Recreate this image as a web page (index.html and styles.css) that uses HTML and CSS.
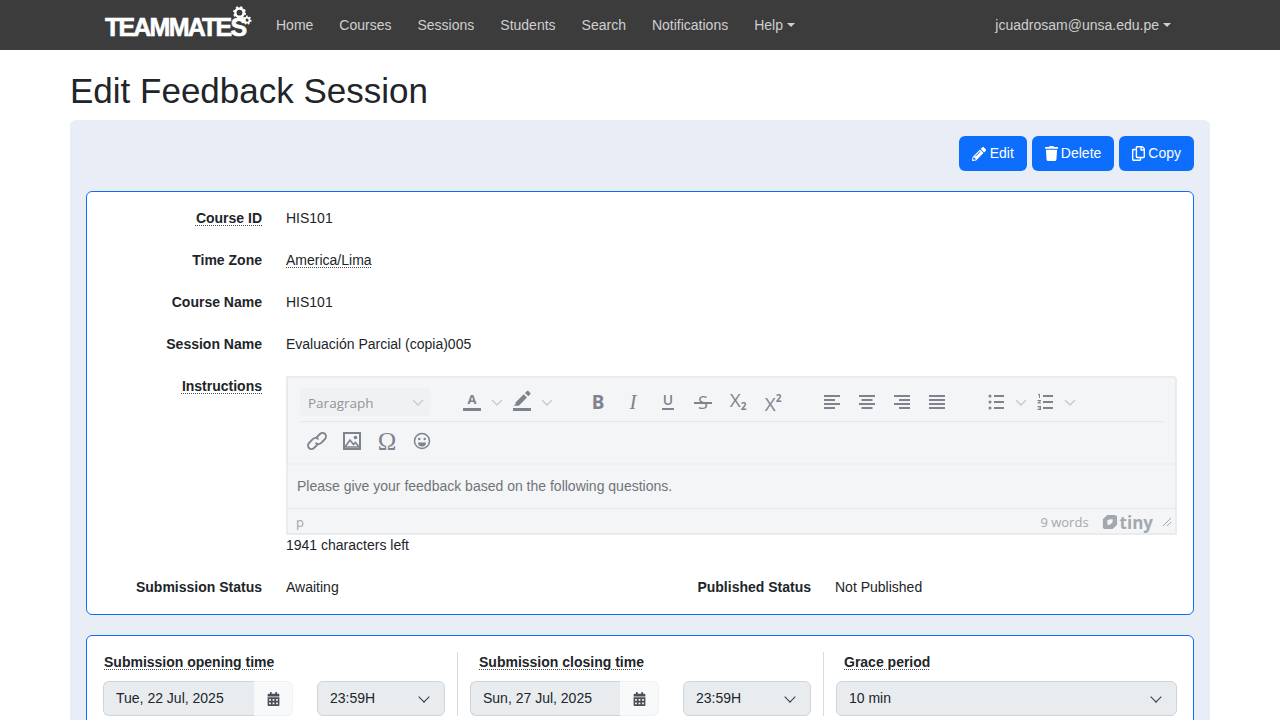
FILE: index.html
```html
<!DOCTYPE html>
<html lang="en">
<head>
    <meta charset="UTF-8">
    <title>Edit Feedback Session</title>
    <link rel="stylesheet" href="styles.css">
</head>
<body>
    <nav class="navbar">
        <a class="brand">TEAMMATES
            <svg class="gears" viewBox="0 0 24 24" width="20" height="20">
                <circle cx="9" cy="8" r="5" fill="none" stroke="#fff" stroke-width="3"/>
                <circle cx="9" cy="8" r="6.6" fill="none" stroke="#fff" stroke-width="2.4" stroke-dasharray="2.6 2.6"/>
                <circle cx="18" cy="17" r="3" fill="none" stroke="#fff" stroke-width="2.2"/>
                <circle cx="18" cy="17" r="4.6" fill="none" stroke="#fff" stroke-width="1.8" stroke-dasharray="2 2"/>
            </svg>
        </a>
        <a class="nav-link">Home</a>
        <a class="nav-link">Courses</a>
        <a class="nav-link">Sessions</a>
        <a class="nav-link">Students</a>
        <a class="nav-link">Search</a>
        <a class="nav-link">Notifications</a>
        <a class="nav-link caret">Help</a>
        <a class="nav-link caret user">jcuadrosam@unsa.edu.pe</a>
    </nav>

    <main class="container">
        <h1>Edit Feedback Session</h1>
        <div class="panel">
            <div class="actions">
                <button class="btn wide-gap">
                    <svg viewBox="0 0 512 512" width="14" height="14"><path fill="currentColor" d="M497.9 142.1l-46.1 46.1c-4.7 4.7-12.3 4.7-17 0l-111-111c-4.7-4.7-4.7-12.3 0-17l46.1-46.1c18.7-18.7 49.1-18.7 67.9 0l60.1 60.1c18.8 18.7 18.8 49.1 0 67.9zM284.2 99.8L21.6 362.4.4 483.9c-2.9 16.4 11.4 30.6 27.8 27.8l121.5-21.3 262.6-262.6c4.7-4.7 4.7-12.3 0-17l-111-111c-4.8-4.7-12.4-4.7-17.1 0zM124.1 339.9c-5.5-5.5-5.5-14.3 0-19.8l154-154c5.5-5.5 14.3-5.5 19.8 0s5.5 14.3 0 19.8l-154 154c-5.5 5.5-14.3 5.5-19.8 0zM88 424h48v36.3l-64.5 11.3-31.1-31.1L51.7 376H88v48z"/></svg>
                    Edit
                </button>
                <button class="btn">
                    <svg viewBox="0 0 448 512" width="13" height="15"><path fill="currentColor" d="M432 32H312l-9.4-18.7A24 24 0 0 0 281.1 0H166.8a23.72 23.72 0 0 0-21.4 13.3L136 32H16A16 16 0 0 0 0 48v32a16 16 0 0 0 16 16h416a16 16 0 0 0 16-16V48a16 16 0 0 0-16-16zM53.2 467a48 48 0 0 0 47.9 45h245.8a48 48 0 0 0 47.9-45L416 128H32z"/></svg>
                    Delete
                </button>
                <button class="btn">
                    <svg viewBox="0 0 448 512" width="13" height="15"><path fill="currentColor" d="M433.941 65.941l-51.882-51.882A48 48 0 0 0 348.118 0H176c-26.51 0-48 21.49-48 48v48H48c-26.51 0-48 21.49-48 48v320c0 26.51 21.49 48 48 48h224c26.51 0 48-21.49 48-48v-48h80c26.51 0 48-21.49 48-48V99.882a48 48 0 0 0-14.059-33.941zM266 464H54a6 6 0 0 1-6-6V150a6 6 0 0 1 6-6h74v224c0 26.51 21.49 48 48 48h96v42a6 6 0 0 1-6 6zm128-96H182a6 6 0 0 1-6-6V54a6 6 0 0 1 6-6h106v88c0 13.255 10.745 24 24 24h88v202a6 6 0 0 1-6 6zm6-256h-64V48h9.632c1.591 0 3.117.632 4.243 1.757l48.368 48.368a6 6 0 0 1 1.757 4.243V112z"/></svg>
                    Copy
                </button>
            </div>

            <section class="card info">
                <div class="row">
                    <span class="label"><span class="dotted">Course ID</span></span>
                    <span>HIS101</span>
                </div>
                <div class="row">
                    <span class="label">Time Zone</span>
                    <span><span class="dotted">America/Lima</span></span>
                </div>
                <div class="row">
                    <span class="label">Course Name</span>
                    <span>HIS101</span>
                </div>
                <div class="row">
                    <span class="label">Session Name</span>
                    <span>Evaluación Parcial (copia)005</span>
                </div>
                <div class="row">
                    <span class="label"><span class="dotted">Instructions</span></span>
                    <div>
                        <div class="editor">
                            <div class="toolbar">
                                <div class="tb-row">
                                    <div class="tb-select"><span class="tb-select-text">Paragraph</span>
                                        <svg viewBox="0 0 12 7" width="12" height="7"><path d="M1 1l5 5 5-5" fill="none" stroke="#c6c9ce" stroke-width="1.3"/></svg>
                                    </div>
                                    <div class="tb-group first">
                                        <span class="tb-btn"><span class="color-a">A</span></span>
                                        <span class="tb-chev"><svg viewBox="0 0 12 7" width="12" height="7"><path d="M1 1l5 5 5-5" fill="none" stroke="#c6c9ce" stroke-width="1.3"/></svg></span>
                                        <span class="tb-btn">
                                            <svg viewBox="0 0 24 24" width="24" height="24">
                                                <path fill="#7d848d" d="M5.5 15.5l8.200-8.200 3.300 3.300-8.200 8.200H5.500l-2 0 2-1.500zM15 6l2-2c.4-.4 1-.4 1.400 0l1.900 1.900c.4.4.4 1 0 1.400l-2 2z" transform="translate(0 -3)"/>
                                                <rect x="3" y="18" width="18" height="3" fill="#7d848d"/>
                                            </svg>
                                        </span>
                                        <span class="tb-chev"><svg viewBox="0 0 12 7" width="12" height="7"><path d="M1 1l5 5 5-5" fill="none" stroke="#c6c9ce" stroke-width="1.3"/></svg></span>
                                    </div>
                                    <div class="tb-group">
                                        <span class="tb-btn"><span class="g-bold">B</span></span>
                                        <span class="tb-btn"><span class="g-italic">I</span></span>
                                        <span class="tb-btn"><span class="g-under">U</span></span>
                                        <span class="tb-btn"><span class="g-strike">S</span></span>
                                        <span class="tb-btn"><span class="g-script up">X<sub>2</sub></span></span>
                                        <span class="tb-btn"><span class="g-script down">X<sup>2</sup></span></span>
                                    </div>
                                    <div class="tb-group">
                                        <span class="tb-btn"><svg viewBox="0 0 24 24" width="24" height="24"><path fill="#7d848d" d="M4 5h16v2H4zM4 9h11v2H4zM4 13h16v2H4zM4 17h11v2H4z"/></svg></span>
                                        <span class="tb-btn"><svg viewBox="0 0 24 24" width="24" height="24"><path fill="#7d848d" d="M4 5h16v2H4zM6.500 9h11v2h-11zM4 13h16v2H4zM6.500 17h11v2h-11z"/></svg></span>
                                        <span class="tb-btn"><svg viewBox="0 0 24 24" width="24" height="24"><path fill="#7d848d" d="M4 5h16v2H4zM9 9h11v2H9zM4 13h16v2H4zM9 17h11v2H9z"/></svg></span>
                                        <span class="tb-btn"><svg viewBox="0 0 24 24" width="24" height="24"><path fill="#7d848d" d="M4 5h16v2H4zM4 9h16v2H4zM4 13h16v2H4zM4 17h16v2H4z"/></svg></span>
                                    </div>
                                    <div class="tb-group lists">
                                        <span class="tb-btn"><svg viewBox="0 0 24 24" width="24" height="24"><path fill="#7d848d" d="M10 5h10v2H10zM10 11h10v2H10zM10 17h10v2H10z"/><circle cx="6" cy="6" r="1.500" fill="#7d848d"/><circle cx="6" cy="12" r="1.500" fill="#7d848d"/><circle cx="6" cy="18" r="1.500" fill="#7d848d"/></svg></span>
                                        <span class="tb-chev"><svg viewBox="0 0 12 7" width="12" height="7"><path d="M1 1l5 5 5-5" fill="none" stroke="#c6c9ce" stroke-width="1.3"/></svg></span>
                                        <span class="tb-btn"><svg viewBox="0 0 24 24" width="24" height="24"><path fill="#7d848d" d="M10 5h10v2H10zM10 11h10v2H10zM10 17h10v2H10zM5 4h2v4H6V5H5zM4.500 10H8v1l-2 1.500h2v1H4.500v-1l2-1.500h-2zM4.500 16H8v4H4.500v-1H7v-.5H5.200v-1H7V17H4.500z"/></svg></span>
                                        <span class="tb-chev"><svg viewBox="0 0 12 7" width="12" height="7"><path d="M1 1l5 5 5-5" fill="none" stroke="#c6c9ce" stroke-width="1.3"/></svg></span>
                                    </div>
                                </div>
                                <div class="tb-row second">
                                    <span class="tb-btn"><svg viewBox="0 0 24 24" width="24" height="24"><path fill="none" stroke="#7d848d" stroke-width="1.800" stroke-linecap="round" d="M11.500 8.500l3.500-3.500a3.500 3.500 0 0 1 5 5l-4 4a3.500 3.500 0 0 1-5 .2M12.500 15.500L9 19a3.500 3.500 0 0 1-5-5l4-4a3.500 3.500 0 0 1 5-.2"/></svg></span>
                                    <span class="tb-btn"><svg viewBox="0 0 24 24" width="24" height="24"><rect x="4" y="4" width="16" height="16" fill="none" stroke="#7d848d" stroke-width="2"/><circle cx="15.500" cy="8.500" r="1.800" fill="#7d848d"/><path d="M5 18l5-7 3.500 4.500 2-2 3.500 4.500z" fill="none" stroke="#7d848d" stroke-width="1.600"/></svg></span>
                                    <span class="tb-btn"><span class="g-omega">Ω</span></span>
                                    <span class="tb-btn"><svg viewBox="0 0 24 24" width="24" height="24"><circle cx="12" cy="12" r="7.500" fill="none" stroke="#7d848d" stroke-width="1.500"/><circle cx="9.300" cy="10" r="1.200" fill="#7d848d"/><circle cx="14.700" cy="10" r="1.200" fill="#7d848d"/><path d="M8 13.500h8a4 4 0 0 1-8 0z" fill="#7d848d"/></svg></span>
                                </div>
                            </div>
                            <div class="editor-body">Please give your feedback based on the following questions.</div>
                            <div class="statusbar">
                                <span class="path">p</span>
                                <span class="words">9 words</span>
                                <span class="tiny">
                                    <svg viewBox="0 0 18 18" width="16" height="16"><path fill="#a3a8ae" fill-rule="evenodd" d="M6 1h8a3 3 0 0 1 3 3v8l-5 5H4a3 3 0 0 1-3-3V6zm0 6v5h3l3-3V6H9z"/></svg>
                                    tiny
                                </span>
                                <svg class="resize" viewBox="0 0 10 10" width="10" height="10"><path d="M1 9l8-8M5 9l4-4" stroke="#a3a8ae" stroke-width="1" fill="none"/></svg>
                            </div>
                        </div>
                        <div class="chars">1941 characters left</div>
                    </div>
                </div>
                <div class="row status">
                    <span class="label">Submission Status</span>
                    <span>Awaiting</span>
                    <span class="label">Published Status</span>
                    <span>Not Published</span>
                </div>
            </section>

            <section class="card times">
                <div class="time-col">
                    <div class="time-label"><span class="dotted">Submission opening time</span></div>
                    <div class="time-inputs">
                        <div class="date-group">
                            <span class="date-input">Tue, 22 Jul, 2025</span>
                            <span class="date-addon"><svg viewBox="0 0 448 512" width="13" height="14"><use href="#cal"/></svg></span>
                        </div>
                        <div class="select small">23:59H</div>
                    </div>
                </div>
                <div class="time-col">
                    <div class="time-label"><span class="dotted">Submission closing time</span></div>
                    <div class="time-inputs">
                        <div class="date-group">
                            <span class="date-input">Sun, 27 Jul, 2025</span>
                            <span class="date-addon"><svg viewBox="0 0 448 512" width="13" height="14"><use href="#cal"/></svg></span>
                        </div>
                        <div class="select small">23:59H</div>
                    </div>
                </div>
                <div class="time-col">
                    <div class="time-label"><span class="dotted">Grace period</span></div>
                    <div class="select">10 min</div>
                </div>
            </section>
        </div>
    </main>

    <svg class="defs" width="0" height="0">
        <symbol id="cal" viewBox="0 0 448 512"><path fill="#495057" d="M0 464c0 26.500 21.500 48 48 48h352c26.500 0 48-21.500 48-48V192H0v272zm320-196c0-6.600 5.400-12 12-12h40c6.600 0 12 5.400 12 12v40c0 6.600-5.400 12-12 12h-40c-6.600 0-12-5.400-12-12v-40zm0 128c0-6.600 5.400-12 12-12h40c6.600 0 12 5.400 12 12v40c0 6.600-5.400 12-12 12h-40c-6.600 0-12-5.400-12-12v-40zM192 268c0-6.600 5.400-12 12-12h40c6.600 0 12 5.400 12 12v40c0 6.600-5.400 12-12 12h-40c-6.600 0-12-5.400-12-12v-40zm0 128c0-6.600 5.400-12 12-12h40c6.600 0 12 5.400 12 12v40c0 6.600-5.400 12-12 12h-40c-6.600 0-12-5.400-12-12v-40zM64 268c0-6.600 5.400-12 12-12h40c6.600 0 12 5.400 12 12v40c0 6.600-5.400 12-12 12H76c-6.600 0-12-5.400-12-12v-40zm0 128c0-6.600 5.400-12 12-12h40c6.600 0 12 5.400 12 12v40c0 6.600-5.400 12-12 12H76c-6.600 0-12-5.400-12-12v-40zM400 64h-48V16c0-8.800-7.200-16-16-16h-32c-8.800 0-16 7.200-16 16v48H160V16c0-8.800-7.200-16-16-16h-32c-8.800 0-16 7.200-16 16v48H48C21.500 64 0 85.500 0 112v48h448v-48c0-26.500-21.500-48-48-48z"/></symbol>
    </svg>
</body>
</html>
```

FILE: styles.css
```css
html, body {
    margin: 0;
    height: 720px;
    overflow: hidden;
}
body {
    font-family: "Liberation Sans", Arial, sans-serif;
    font-size: 14px;
    line-height: 21px;
    color: #212529;
    background: #fff;
}
.defs {
    display: block;
}

.navbar {
    display: flex;
    align-items: center;
    height: 50px;
    padding-left: 105px;
    padding-right: 109px;
    background: #3c3c3c;
}
.brand {
    display: flex;
    width: 145px;
    margin-right: 26px;
    color: #fff;
    font-size: 25px;
    font-weight: bold;
    letter-spacing: -1.8px;
    -webkit-text-stroke: 0.6px #fff;
    white-space: nowrap;
    position: relative;
    top: 2px;
}
.gears {
    position: absolute;
    left: 127px;
    top: -11px;
}
.nav-link {
    color: #cfcfcf;
    margin-right: 26px;
}
.caret::after {
    content: "";
    display: inline-block;
    margin-left: 4px;
    vertical-align: 3px;
    border-top: 4px solid;
    border-left: 4px solid transparent;
    border-right: 4px solid transparent;
}
.user {
    margin-left: auto;
    margin-right: 0;
}

.container {
    width: 1140px;
    margin: 0 auto;
}
h1 {
    margin: 0;
    padding-top: 19px;
    height: 51px;
    font-size: 35px;
    line-height: 43px;
    font-weight: 400;
}
.panel {
    padding: 16px;
    background: #e9edf5;
    border-radius: 6px;
}
.actions {
    display: flex;
    justify-content: flex-end;
    gap: 5px;
    margin-bottom: 20px;
}
.btn {
    display: flex;
    align-items: center;
    gap: 3px;
    height: 35px;
    padding: 0 13px;
    border: 0;
    border-radius: 6px;
    background: #0d6efd;
    color: #fff;
    font: inherit;
}
.btn.wide-gap {
    gap: 4px;
}

.card {
    background: #fff;
    border: 1px solid #0d6efd;
    border-radius: 6px;
}
.info {
    padding: 16px 16px 16px 0;
    margin-bottom: 20px;
}
.row {
    display: grid;
    grid-template-columns: 175px 1fr;
    column-gap: 24px;
    margin-bottom: 21px;
}
.row:last-child {
    margin-bottom: 0;
}
.status {
    grid-template-columns: 175px 239px 262px 1fr;
}
.label {
    text-align: right;
    font-weight: bold;
}
.dotted {
    text-decoration: underline dotted #4a4f55 1px;
    text-underline-offset: 2px;
}

.editor {
    height: 159px;
    box-sizing: border-box;
    display: flex;
    flex-direction: column;
    background: #f4f5f7;
    border: 2px solid #eaebee;
    border-radius: 0 4px 0 0;
}
.toolbar {
    height: 86px;
    flex: none;
    box-sizing: border-box;
    padding: 10px 11px 0 12px;
    border-bottom: 1px solid #eef0f2;
    box-shadow: 0 1px 2px rgba(0, 0, 0, 0.03);
}
.tb-row {
    display: flex;
    align-items: flex-start;
    height: 34px;
    box-sizing: border-box;
    border-bottom: 1px solid #e5e7ea;
}
.tb-row.second {
    border-bottom: 0;
    margin-top: 5px;
}
.tb-select {
    display: flex;
    align-items: center;
    justify-content: space-between;
    box-sizing: border-box;
    width: 130px;
    height: 28px;
    padding: 0 6px 0 8px;
    background: #f0f1f3;
    border-radius: 3px;
    color: #8f959c;
    font-family: "Open Sans", sans-serif;
    font-size: 13.500px;
}
.tb-select-text {
    padding-top: 2px;
}
.tb-group {
    display: flex;
    align-items: center;
    gap: 1px;
    margin-left: 25px;
}
.tb-group.first {
    gap: 0;
    margin-right: 2px;
}
.tb-group.lists {
    gap: 0;
}
.tb-btn {
    display: flex;
    align-items: center;
    justify-content: center;
    width: 34px;
    height: 28px;
    margin-right: 1px;
    color: #7d848d;
}
.tb-group .tb-btn {
    margin-right: 0;
}
.tb-group.first .tb-btn:nth-child(3) {
    margin-left: 1px;
}
.tb-chev {
    display: flex;
    align-items: center;
    justify-content: center;
    width: 15px;
    height: 28px;
}
.color-a {
    display: block;
    width: 18px;
    height: 18px;
    line-height: 13px;
    text-align: center;
    font-family: "Open Sans", sans-serif;
    font-weight: 700;
    font-size: 13px;
    border-bottom: 3px solid #7d848d;
    box-sizing: border-box;
}
.g-bold {
    font-family: "Noto Sans", sans-serif;
    font-weight: 700;
    font-size: 19px;
}
.g-italic {
    font-family: "Liberation Serif", serif;
    font-style: italic;
    font-size: 21px;
}
.g-under {
    display: block;
    width: 12px;
    height: 16px;
    line-height: 12px;
    text-align: center;
    font-size: 14px;
    font-family: "Open Sans", sans-serif;
    font-weight: 600;
    border-bottom: 2px solid #7d848d;
    box-sizing: border-box;
}
.g-strike {
    position: relative;
    font-family: "Open Sans", sans-serif;
    font-size: 18px;
    font-weight: 400;
}
.g-strike::after {
    content: "";
    position: absolute;
    left: -4px;
    right: -4px;
    top: 10px;
    height: 2px;
    background: #7d848d;
}
.g-script {
    font-family: "Open Sans", sans-serif;
    font-size: 19px;
    line-height: 20px;
}
.g-script.up {
    margin-top: -4px;
}
.g-script.down {
    margin-top: 3px;
}
.g-script sub, .g-script sup {
    font-size: 10px;
    font-weight: 700;
    line-height: 0;
}
.g-script sub {
    vertical-align: -3px;
}
.g-script sup {
    vertical-align: 9px;
}
.g-omega {
    font-family: "Liberation Serif", serif;
    font-size: 25px;
}
.editor-body {
    flex: 1;
    padding: 12px 9px 0;
    color: #6f7479;
}
.statusbar {
    display: flex;
    align-items: center;
    box-sizing: border-box;
    height: 25px;
    padding: 2px 3px 0 8px;
    border-top: 1px solid #e5e7ea;
    color: #a3a8ae;
    font-family: "Open Sans", sans-serif;
    font-size: 13px;
}
.words {
    margin-left: auto;
    margin-right: 13px;
}
.tiny {
    display: flex;
    align-items: center;
    gap: 2px;
    margin-right: 9px;
    font-size: 17px;
    font-weight: 700;
    color: #a3a8ae;
}

.times {
    display: grid;
    grid-template-columns: 354px 366px 354px;
    padding: 16px;
}
.time-col {
    box-sizing: border-box;
    padding: 0 12px;
    border-left: 1px solid #d8dadd;
}
.time-col:first-child {
    padding-left: 0;
    border-left: 0;
}
.time-col:last-child {
    padding-right: 0;
}
.time-label {
    padding-left: 8px;
    margin-bottom: 8px;
    font-weight: bold;
}
.time-col:first-child .time-label {
    padding-left: 1px;
}
.time-col:nth-child(2) .time-label {
    padding-left: 9px;
}
.time-col:nth-child(2) .date-group {
    width: 189px;
}
.time-inputs {
    display: flex;
    justify-content: space-between;
}
.date-group {
    display: flex;
    width: 190px;
    height: 35px;
}
.date-input {
    flex: 1;
    padding: 0 12px;
    line-height: 33px;
    background: #e9ecef;
    border: 1px solid #ced4da;
    border-right: 0;
    border-radius: 6px 0 0 6px;
}
.date-addon {
    display: flex;
    align-items: center;
    justify-content: center;
    width: 38px;
    background: #f8f9fa;
    border: 1px solid #eef0f2;
    border-left: 0;
    border-radius: 0 6px 6px 0;
}
.select {
    box-sizing: border-box;
    height: 35px;
    padding: 0 12px;
    line-height: 33px;
    background: #e9ecef;
    border: 1px solid #ced4da;
    border-radius: 6px;
    position: relative;
}
.select.small {
    width: 128px;
}
.select::after {
    content: "";
    position: absolute;
    right: 16px;
    top: 11px;
    width: 7px;
    height: 7px;
    border-right: 1.6px solid #343a40;
    border-bottom: 1.6px solid #343a40;
    transform: rotate(45deg);
}
```
